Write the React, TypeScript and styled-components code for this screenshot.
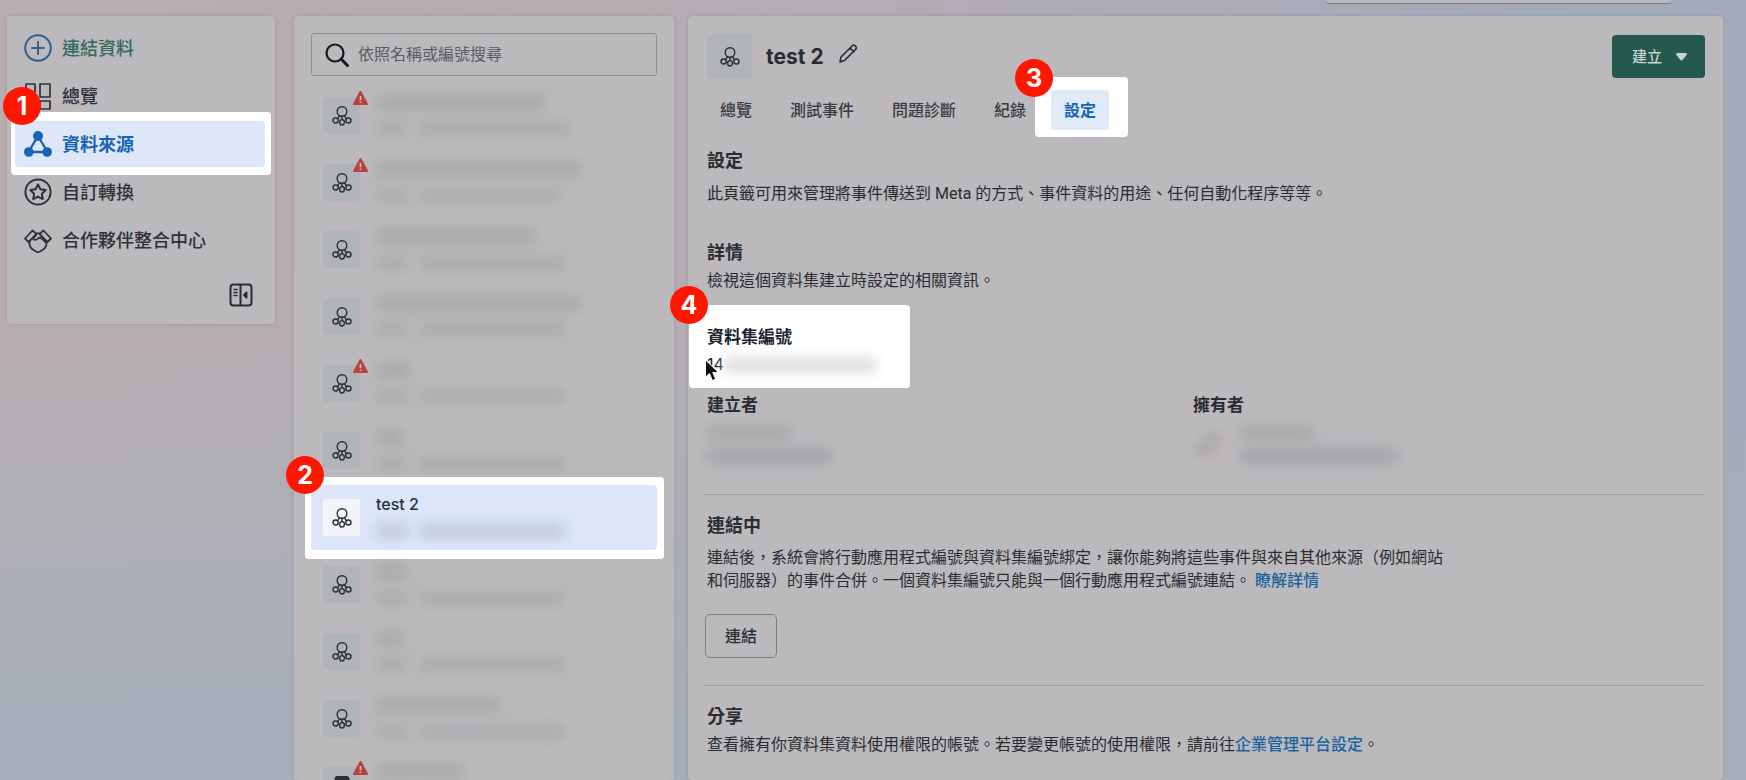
import React from "react";
import styled, { createGlobalStyle, css } from "styled-components";

const GlobalStyle = createGlobalStyle`
  *, *::before, *::after { box-sizing: border-box; }
  body {
    margin: 0;
    color: #2a2c33;
    font: 16px/23px Inter, "Noto Sans CJK TC", sans-serif;
  }
  button, input { font: inherit; color: inherit; }
  h1, h2, h3, p, ul { margin: 0; padding: 0; }
  ul { list-style: none; }
`;

const panelColor = "#bbb9bc";

const Shell = styled.div`
  position: relative;
  display: flex;
  align-items: flex-start;
  height: 100vh;
  padding: 16px 23px 0 7px;
  overflow: hidden;
  background:
    linear-gradient(180deg, rgba(164, 174, 187, 0) 35%, #a5aeb9 95%),
    linear-gradient(90deg, #b9adb0 0%, #b5acb1 35%, #aeabb6 65%, #a3acbb 90%);
`;

const TopStrip = styled.div`
  position: absolute;
  top: 0;
  right: 74px;
  width: 346px;
  height: 3px;
  background: ${panelColor};
  border-radius: 0 0 4px 4px;
  box-shadow: 0 1px 1px rgba(60, 60, 70, 0.4);
`;

const Panel = styled.section`
  background: ${panelColor};
  border-radius: 4px;
  box-shadow: 0 0 4px rgba(80, 80, 90, 0.2);
`;

/* Highlighted steps */

const Lit = styled.span<{ $inset: string }>`
  position: absolute;
  inset: ${(p) => p.$inset};
  z-index: -1;
  background: #fff;
  border-radius: 4px;
`;

const StepBadge = styled.span<{ $top: number; $left: number }>`
  position: absolute;
  top: ${(p) => p.$top}px;
  left: ${(p) => p.$left}px;
  z-index: 2;
  display: flex;
  align-items: center;
  justify-content: center;
  width: 38px;
  height: 38px;
  border-radius: 50%;
  background: #ff1700;
  color: #fff;
  font-size: 25px;
  font-weight: 700;
  line-height: 38px;
`;

const Stepped = styled.div`
  position: relative;
  z-index: 1;
`;

/* Navigation */

const NavPanel = styled(Panel).attrs({ as: "nav" })`
  flex: none;
  width: 268px;
  height: 308px;
  margin-right: 19px;
  padding: 9px 10px 0 8px;
`;

const NavList = styled.ul`
  display: flex;
  flex-direction: column;
  gap: 2px;
`;

const NavLink = styled.a<{ $tone?: "active" | "create" }>`
  display: flex;
  align-items: center;
  gap: 10px;
  height: 46px;
  padding-left: 9px;
  border-radius: 4px;
  font-size: 18px;
  font-weight: 500;
  text-decoration: none;
  color: #2f3138;
  ${(p) => p.$tone === "create" && css`color: #2f6b5c; svg { color: #2f5f8d; }`}
  ${(p) => p.$tone === "active" && css`color: #1863b4; font-weight: 700; background: #dee7f8;`}
`;

const CollapseButton = styled.button`
  display: block;
  margin: 20px 12px 0 auto;
  padding: 0;
  border: 0;
  background: none;
  height: 24px;
`;

/* Data set list */

const ListPanel = styled(Panel)`
  flex: none;
  align-self: stretch;
  width: 380px;
  margin-right: 14px;
  padding: 17px 17px 0;
`;

const SearchBox = styled.label`
  display: flex;
  align-items: center;
  gap: 8px;
  height: 43px;
  margin-bottom: 7px;
  padding: 0 12px;
  border: 1px solid #8d8f95;
  border-radius: 3px;
  color: #17181c;
`;

const SearchInput = styled.input`
  flex: 1;
  min-width: 0;
  padding: 0;
  border: 0;
  outline: 0;
  background: none;
  &::placeholder { color: #5a5c63; opacity: 1; }
`;

const DataSets = styled.ul`
  display: flex;
  flex-direction: column;
  gap: 2px;
`;

const DataSetButton = styled.button<{ $active?: boolean }>`
  display: flex;
  align-items: center;
  gap: 16px;
  width: 100%;
  height: 65px;
  padding: 0 12px;
  border: 0;
  border-radius: 4px;
  text-align: left;
  font-weight: ${(p) => (p.$active ? 500 : 400)};
  color: #25303f;
  background: ${(p) => (p.$active ? "#dce6f8" : "none")};
`;

const Tile = styled.span<{ $size?: number; $active?: boolean }>`
  position: relative;
  flex: none;
  display: flex;
  align-items: center;
  justify-content: center;
  width: ${(p) => p.$size ?? 37}px;
  height: ${(p) => p.$size ?? 37}px;
  border-radius: 3px;
  color: #2c2e36;
  background: ${(p) => (p.$active ? "#f3f5fb" : "#b0b4b9")};
`;

const Warning = styled.svg`
  position: absolute;
  top: -6px;
  right: -8px;
`;

const Lines = styled.span`
  display: flex;
  flex: 1;
  flex-direction: column;
  gap: 4px;
`;

const Line = styled.span`
  display: flex;
  align-items: center;
  gap: 12px;
  height: 23px;
`;

const Redacted = styled.span<{ $width: number; $tone?: string }>`
  width: ${(p) => p.$width}px;
  height: 16px;
  border-radius: 3px;
  background: ${(p) => p.$tone ?? "#abaaac"};
  filter: blur(6px);
`;

/* Detail */

const Detail = styled(Panel).attrs({ as: "main" })`
  flex: 1;
  align-self: stretch;
  min-width: 0;
  padding: 18px 18px 0 19px;
`;

const Header = styled.header`
  display: flex;
  align-items: center;
  height: 45px;
`;

const Title = styled.h1`
  margin: 0 14px 0 14px;
  font-size: 21px;
  font-weight: 700;
  line-height: 28px;
`;

const IconButton = styled.button`
  display: flex;
  padding: 0 0 6px;
  border: 0;
  background: none;
`;

const CreateButton = styled.button`
  display: flex;
  align-items: center;
  gap: 14px;
  height: 43px;
  margin-left: auto;
  padding: 0 18px 0 20px;
  border: 0;
  border-radius: 4px;
  background: #24594b;
  color: #c9d3d0;
  font-size: 15px;
  font-weight: 500;
`;

const Tabs = styled.div`
  display: flex;
  gap: 12px;
  margin: 11px 0 19px;
`;

const Tab = styled.button<{ $active?: boolean }>`
  height: 40px;
  padding: 0 13px;
  border: 0;
  border-radius: 4px;
  font-weight: ${(p) => (p.$active ? 700 : 500)};
  color: ${(p) => (p.$active ? "#1665b2" : "#3a3c43")};
  background: ${(p) => (p.$active ? "#dfe9f8" : "none")};
`;

const Heading = styled.h2`
  font-size: 18px;
  font-weight: 700;
  line-height: 24px;
`;

const Label = styled.h3`
  margin-bottom: 4px;
  font-size: 17px;
  font-weight: 700;
  line-height: 24px;
`;

const Copy = styled.p<{ $gap?: number }>`
  max-width: 750px;
  margin-top: ${(p) => p.$gap ?? 4}px;
  font-family: Roboto, "Noto Sans CJK TC", sans-serif;
`;

const Section = styled.section<{ $above: number }>`
  margin-top: ${(p) => p.$above}px;
`;

const DataSetId = styled(Stepped)`
  width: 203px;
  margin: 33px 0 17px;
  color: #1c2430;
`;

const IdValue = styled.div`
  display: flex;
  align-items: center;
  height: 23px;
`;

const Pointer = styled.svg`
  position: absolute;
  left: -3px;
  bottom: -6px;
`;

const People = styled.div`
  display: grid;
  grid-template-columns: 1fr 1fr;
  padding-right: 26px;
`;

const Person = styled.div`
  display: flex;
  align-items: center;
  gap: 18px;
`;

const PersonLines = styled.div`
  display: flex;
  flex-direction: column;
`;

const Avatar = styled.span`
  width: 30px;
  height: 30px;
  border-radius: 50%;
  background: linear-gradient(135deg, #b5bbb9 20%, #aaa9ad 50%, #c6b0a8 80%);
  filter: blur(5px);
`;

const Rule = styled.hr`
  height: 1px;
  margin: 27px 0 19px -3px;
  border: 0;
  background: #a09fa4;
`;

const Link = styled.a`
  color: #1c649f;
  font-weight: 500;
  text-decoration: none;
`;

const OutlineButton = styled.button`
  display: block;
  height: 44px;
  margin: 22px 0 0 -2px;
  padding: 0 19px;
  border: 1px solid #7d7e84;
  border-radius: 5px;
  background: none;
  font-weight: 500;
`;

/* Icons */

const line = { fill: "none", stroke: "currentColor", strokeWidth: 2, strokeLinejoin: "round" as const, strokeLinecap: "round" as const };

const PlusIcon = () => (
  <svg width="28" height="28" viewBox="0 0 28 28" {...line}>
    <circle cx="14" cy="14" r="12.8" /><path d="M14 8v12M8 14h12" />
  </svg>
);
const GridIcon = () => (
  <svg width="28" height="28" viewBox="0 0 28 28" {...line} strokeWidth={1.7}>
    <path d="M2 2h9v8H2zM16 2h10v13H16zM2 14h9v12H2zM16 19h10v8H16z" />
  </svg>
);
const SourcesIcon = () => (
  <svg width="28" height="28" viewBox="0 0 28 28" {...line} strokeWidth={2.4}>
    <path d="M14 6 4.500 22h19z" />
    <g fill="currentColor" stroke="none"><circle cx="14" cy="6" r="5" /><circle cx="4.800" cy="22" r="4.800" /><circle cx="23.200" cy="22" r="4.800" /></g>
  </svg>
);
const StarIcon = () => (
  <svg width="28" height="28" viewBox="0 0 28 28" {...line}>
    <circle cx="14" cy="14" r="12.6" />
    <path d="m14 6.500 2.400 4.800 5.300.8-3.800 3.700.9 5.300-4.800-2.500-4.800 2.500.9-5.300-3.800-3.700 5.300-.8z" />
  </svg>
);
const HandshakeIcon = () => (
  <svg width="28" height="28" viewBox="0 0 28 28" {...line} strokeWidth={1.800}>
    <path d="M1 12.500 8.500 4.500l4 3.500-8 8zM27 12.500 19.500 4.500l-4 3.500 8 8z" />
    <path d="M12.500 7.500c1-.6 2-.6 3 0M12 9.500l-3 2.700c.5 2.300 3.500 2.300 5 .3 1.500-1 3-.8 4 .3l4 3.700M5.500 15.500c-.5 4 1.500 7 4 8.500l2.500 1.500c1.200.8 2.800.8 4 0l2.500-1.500c2.500-1.500 4.200-4 4-7.500" />
  </svg>
);
const CollapseIcon = () => (
  <svg width="24" height="24" viewBox="0 0 24 24" {...line}>
    <rect x="1.500" y="1.500" width="21" height="21" rx="3" />
    <path d="M11.500 2v20" />
    <path d="M5 6.500h3M5 9.500h3M5 12.500h3" strokeWidth="1.500" />
    <path d="m17.500 9.500-2.500 2.500 2.500 2.500z" fill="currentColor" />
  </svg>
);
const SearchIcon = () => (
  <svg width="26" height="26" viewBox="0 0 26 26" {...line} strokeWidth={2.200}>
    <circle cx="11" cy="11" r="8.500" /><path d="m17.500 17.500 6 6" strokeWidth="3" />
  </svg>
);
const DataSetIcon = () => (
  <svg width="20" height="20" viewBox="0 0 20 20" {...line} strokeWidth={1.400}>
    <circle cx="10" cy="5.500" r="4.800" />
    <ellipse cx="3.600" cy="14.500" rx="2.600" ry="2.500" /><ellipse cx="10" cy="16.300" rx="2.400" ry="2.700" /><ellipse cx="16.400" cy="14.500" rx="2.600" ry="2.500" />
    <path d="M7.500 9.800 5.800 12.400M10 10.300v3.300M12.500 9.800l1.700 2.600" />
  </svg>
);
const AppIcon = () => (
  <svg width="16" height="20" viewBox="0 0 16 20" {...line} strokeWidth={1.800}>
    <rect x="2" y="1" width="12" height="18" rx="1" /><path d="M2 2.500h12" strokeWidth="3" />
  </svg>
);
const WarningIcon = () => (
  <Warning width="15" height="14" viewBox="0 0 15 14">
    <path d="M7.500 1 14 13H1z" fill="#b8423e" stroke="#b8423e" strokeWidth="2" strokeLinejoin="round" />
    <path d="M7.500 5v4.300M7.500 10.800v1.200" stroke="#d9c7c8" strokeWidth="1.600" />
  </Warning>
);
const PencilIcon = () => (
  <svg width="20" height="20" viewBox="0 0 20 20" {...line} strokeWidth={1.600}>
    <path d="M2 18l1-5L14 2c1.200-1.200 2.500-1 3.500 0s1.200 2.300 0 3.500L6.500 16.500zM12 4l4 4" />
  </svg>
);

/* Page */

type Row = { name: number; id: number; warn?: boolean; app?: boolean; title?: string };

const rows: Row[] = [
  { name: 170, id: 150, warn: true },
  { name: 205, id: 140, warn: true },
  { name: 160, id: 145 },
  { name: 205, id: 145 },
  { name: 35, id: 145, warn: true },
  { name: 28, id: 145 },
  { name: 0, id: 145, title: "test 2" },
  { name: 30, id: 145 },
  { name: 28, id: 145 },
  { name: 124, id: 145 },
  { name: 88, id: 145, warn: true, app: true },
];

const DataSetRow = ({ row }: { row: Row }) => {
  const active = Boolean(row.title);
  const tone = active ? "#c3cddf" : "#afadb0";
  return (
    <DataSetButton $active={active} aria-label={row.title ?? "資料集"}>
      <Tile $active={active}>
        {row.app ? <AppIcon /> : <DataSetIcon />}
        {row.warn && <WarningIcon />}
      </Tile>
      <Lines>
        <Line>{row.title ?? <Redacted $width={row.name} />}</Line>
        <Line>
          <Redacted $width={32} $tone={tone} />
          <Redacted $width={row.id} $tone={tone} />
        </Line>
      </Lines>
    </DataSetButton>
  );
};

export default function App() {
  return (
    <>
      <GlobalStyle />
      <Shell lang="zh-Hant-TW">
        <TopStrip />
        <NavPanel>
          <NavList>
            <li><NavLink href="#connect" $tone="create"><PlusIcon />連結資料</NavLink></li>
            <li><NavLink href="#overview"><GridIcon />總覽</NavLink></li>
            <li>
              <Stepped>
                <Lit $inset="-9px -6px -8px -4px" />
                <NavLink href="#sources" $tone="active" aria-current="page"><SourcesIcon />資料來源</NavLink>
                <StepBadge $top={-34} $left={-12}>1</StepBadge>
              </Stepped>
            </li>
            <li><NavLink href="#conversions"><StarIcon />自訂轉換</NavLink></li>
            <li><NavLink href="#partners"><HandshakeIcon />合作夥伴整合中心</NavLink></li>
          </NavList>
          <CollapseButton aria-label="收合選單"><CollapseIcon /></CollapseButton>
        </NavPanel>

        <ListPanel>
          <SearchBox>
            <SearchIcon />
            <SearchInput type="search" placeholder="依照名稱或編號搜尋" aria-label="依照名稱或編號搜尋" />
          </SearchBox>
          <DataSets>
            {rows.map((row, i) => (
              <li key={i}>
                {row.title ? (
                  <Stepped>
                    <Lit $inset="-8px -7px -9px -6px" />
                    <DataSetRow row={row} />
                    <StepBadge $top={-29} $left={-25}>2</StepBadge>
                  </Stepped>
                ) : (
                  <DataSetRow row={row} />
                )}
              </li>
            ))}
          </DataSets>
        </ListPanel>

        <Detail>
          <Header>
            <Tile $size={45}><DataSetIcon /></Tile>
            <Title>test 2</Title>
            <IconButton aria-label="編輯名稱"><PencilIcon /></IconButton>
            <CreateButton>
              建立
              <svg width="11" height="8" viewBox="0 0 11 8" fill="currentColor"><path d="M1.500 0h8Q11 0 11 1.500L6.500 7q-1 1-2 0L0 1.500Q0 0 1.500 0z" /></svg>
            </CreateButton>
          </Header>
          <Tabs role="tablist">
            <Tab role="tab">總覽</Tab>
            <Tab role="tab">測試事件</Tab>
            <Tab role="tab">問題診斷</Tab>
            <Tab role="tab">紀錄</Tab>
            <Stepped>
              <Lit $inset="-13px -19px -7px -16px" />
              <Tab role="tab" aria-selected $active>設定</Tab>
              <StepBadge $top={-31} $left={-36}>3</StepBadge>
            </Stepped>
          </Tabs>

          <Heading>設定</Heading>
          <Copy $gap={9}>此頁籤可用來管理將事件傳送到 Meta 的方式、事件資料的用途、任何自動化程序等等。</Copy>

          <Section $above={36}>
            <Heading>詳情</Heading>
            <Copy>檢視這個資料集建立時設定的相關資訊。</Copy>
            <DataSetId>
              <Lit $inset="-20px 0 -12px -18px" />
              <Label>資料集編號</Label>
              <IdValue>14<Redacted $width={152} $tone="#dfdfe1" /></IdValue>
              <Pointer width="16" height="23" viewBox="0 0 16 23">
                <path d="M1.500 1v17l4-3.500 2.800 7 3.400-1.400-2.900-6.600h5.700z" fill="#101114" stroke="#fff" strokeWidth="1" />
              </Pointer>
              <StepBadge $top={-39} $left={-37}>4</StepBadge>
            </DataSetId>
            <People>
              <div>
                <Label>建立者</Label>
                <PersonLines>
                  <Line><Redacted $width={84} /></Line>
                  <Line><Redacted $width={124} $tone="#a5a5a9" /></Line>
                </PersonLines>
              </div>
              <div>
                <Label>擁有者</Label>
                <Person>
                  <Avatar />
                  <PersonLines>
                    <Line><Redacted $width={74} /></Line>
                    <Line><Redacted $width={156} $tone="#a5a5a9" /></Line>
                  </PersonLines>
                </Person>
              </div>
            </People>
          </Section>
          <Rule />

          <Heading>連結中</Heading>
          <Copy $gap={8}>
            連結後，系統會將行動應用程式編號與資料集編號綁定，讓你能夠將這些事件與來自其他來源（例如網站和伺服器）的事件合併。一個資料集編號只能與一個行動應用程式編號連結。 <Link href="#learn-more">瞭解詳情</Link>
          </Copy>
          <OutlineButton>連結</OutlineButton>
          <Rule />

          <Heading>分享</Heading>
          <Copy>
            查看擁有你資料集資料使用權限的帳號。若要變更帳號的使用權限，請前往<Link href="#business-settings">企業管理平台設定</Link>。
          </Copy>
        </Detail>
      </Shell>
    </>
  );
}
